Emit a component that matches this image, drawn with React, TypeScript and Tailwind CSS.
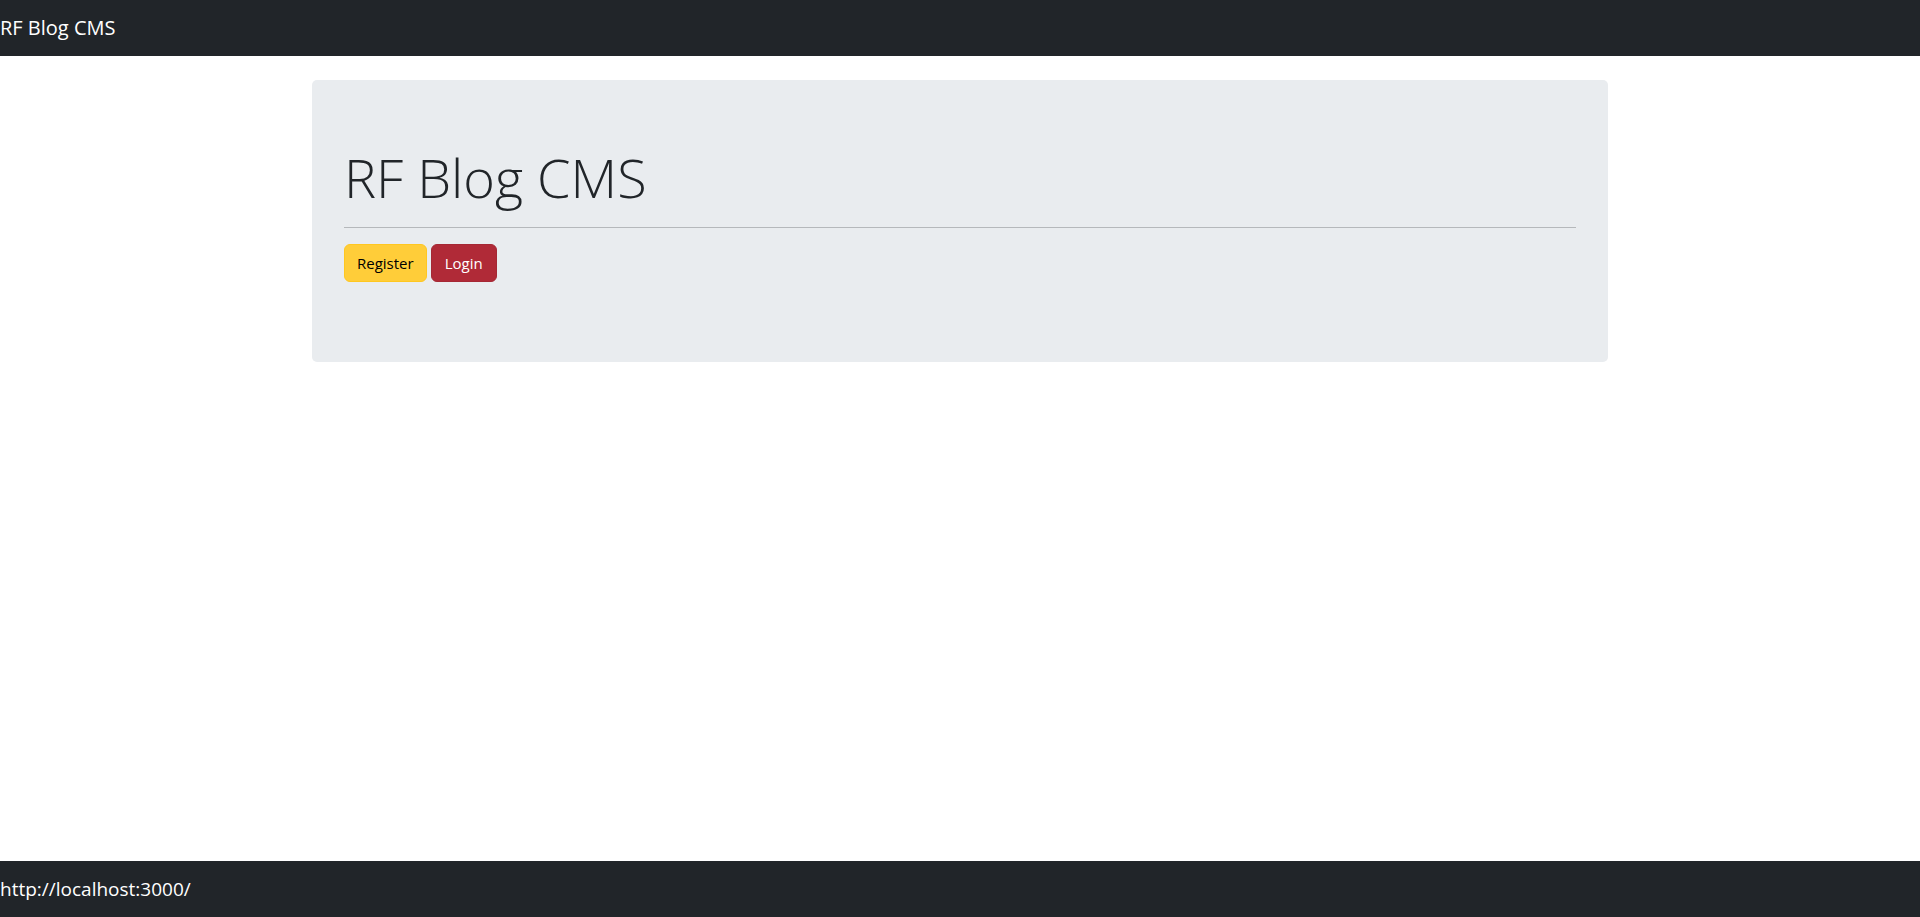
import React from 'react';

export default function App() {
  return (
    <div className="flex flex-col h-screen bg-white text-[#212529]" style={{ fontFamily: '"Open Sans", "Noto Sans", sans-serif' }}>
      {/* Top navbar */}
      <nav className="h-[56px] shrink-0 bg-[#212529] flex items-center">
        <a href="#" className="text-white text-[20px] leading-[30px]">RF Blog CMS</a>
      </nav>

      {/* Content */}
      <main className="flex-1">
        <div className="max-w-[1320px] mx-auto px-3 pt-6">
          <div className="bg-[#e9ecef] rounded-[5px] px-8 pt-16 pb-16">
            <h1 className="text-[54px] font-light leading-[67px]">RF Blog CMS</h1>
            <hr className="mt-4 mb-4 border-0 h-px bg-[#b5b8bb]" />
            <div className="flex gap-1 mb-4">
              <button className="h-[38px] px-3 rounded-[6px] bg-[#ffcd39] border border-[#ffc720] text-black text-[15px]">Register</button>
              <button className="h-[38px] px-[13px] rounded-[6px] bg-[#b02a37] border border-[#a52834] text-white text-[15px]">Login</button>
            </div>
          </div>
        </div>
      </main>

      {/* Status footer */}
      <footer className="h-[56px] shrink-0 bg-[#212529] flex items-center">
        <span className="text-white text-[19px]">http://localhost:3000/</span>
      </footer>
    </div>
  );
}
